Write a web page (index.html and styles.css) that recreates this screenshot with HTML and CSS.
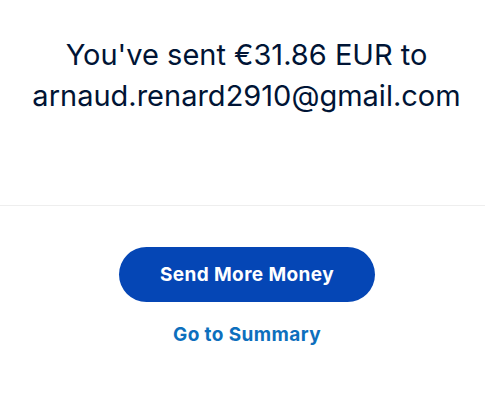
FILE: index.html
```html
<!DOCTYPE html>
<html lang="en">
<head>
    <meta charset="UTF-8">
    <meta name="viewport" content="width=device-width, initial-scale=1.0">
    <title>Payment sent</title>
    <link rel="stylesheet" href="styles.css">
</head>
<body>
    <div class="done">
        <div class="top">
            <h2 class="title">You've sent €31.86 EUR to arnaud.renard2910@gmail.com</h2>
        </div>
        <div class="actions">
            <button type="button" class="button">Send More Money</button>
            <a href="#" class="summary">Go to Summary</a>
        </div>
    </div>
</body>
</html>
```

FILE: styles.css
```css
*{
    margin: 0;
    padding: 0;
    box-sizing: border-box;
}
html,body{
    width: 100%;
    height: 100%;
    background-color: #fff;
    font-family: Inter, "Liberation Sans", Arial, sans-serif;
}
.top{
    padding: 34px 10px 0 18px;
    height: 206px;
    border-bottom: 1px solid #eeeeee;
}
.title{
    text-align: center;
    font-weight: 400;
    font-size: 29px;
    line-height: 41px;
    color: #001435;
}
.actions{
    display: flex;
    flex-direction: column;
    align-items: center;
    padding: 41px 0 0 9px;
}
.button{
    width: 256px;
    height: 55px;
    border: none;
    border-radius: 28px;
    background-color: #0546b5;
    color: #fff;
    font-family: inherit;
    font-size: 19px;
    font-weight: 700;
    letter-spacing: 0.4px;
}
.summary{
    margin-top: 21px;
    text-decoration: none;
    color: #0d6fbd;
    font-size: 19px;
    font-weight: 700;
    letter-spacing: 0.4px;
}
```
